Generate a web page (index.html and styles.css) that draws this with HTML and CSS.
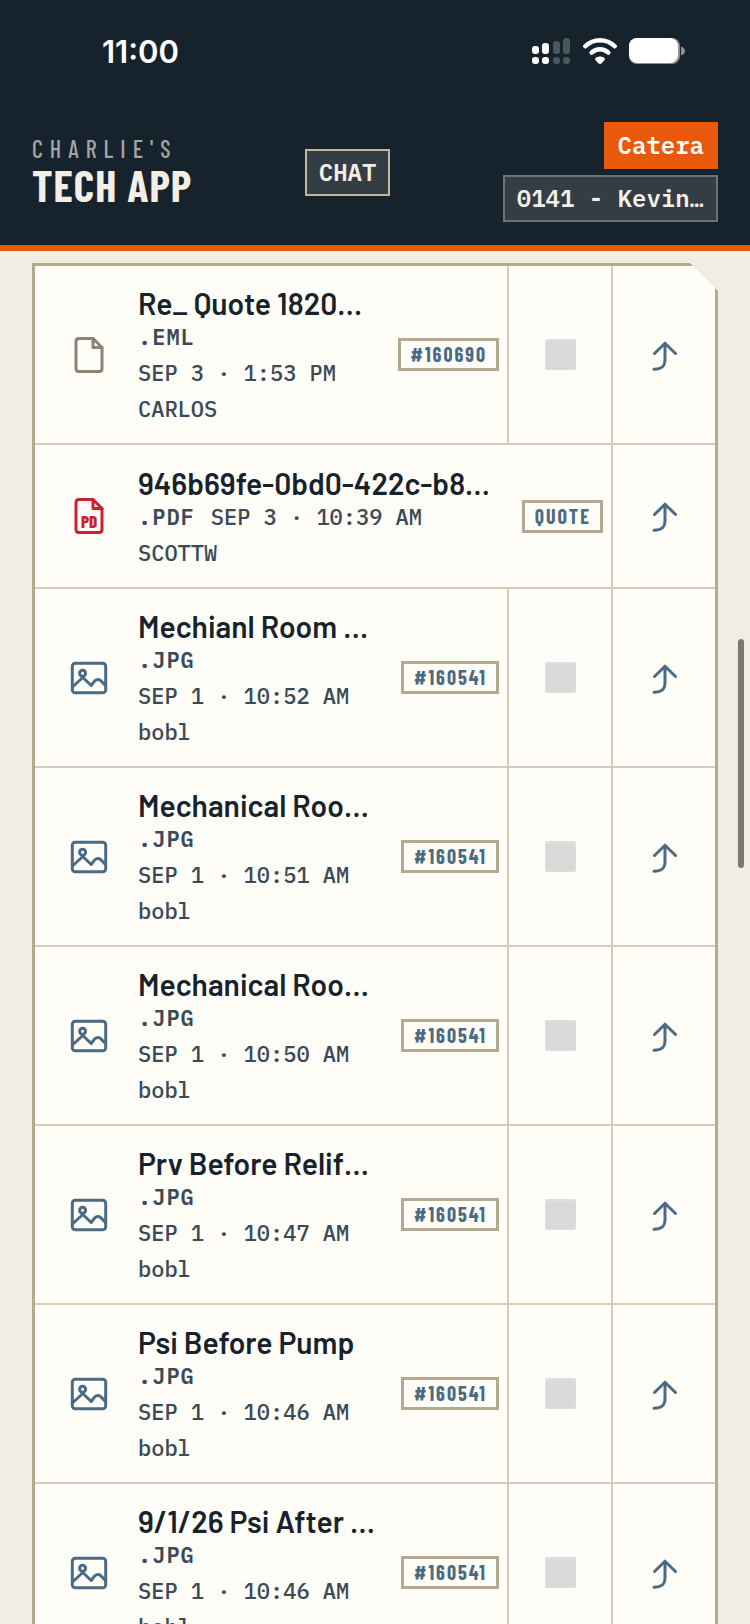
FILE: index.html
```html
<!DOCTYPE html>
<html lang="en">
<head>
    <meta charset="UTF-8">
    <meta name="viewport" content="width=device-width, initial-scale=1.0">
    <title>Charlie's Tech App</title>
    <link rel="stylesheet" href="styles.css">
</head>
<body>
    <!-- Shared icons -->
    <svg class="icon-defs" aria-hidden="true">
        <symbol id="icon-file" viewBox="0 0 40 40">
            <path d="M10 3.5H24L33 12.5V33.5Q33 36.5 30 36.5H10Q7 36.5 7 33.5V6.5Q7 3.5 10 3.5Z"/>
            <path d="M24 3.5V12.5H33"/>
        </symbol>
        <symbol id="icon-image" viewBox="0 0 40 40">
            <rect x="3.3" y="5.3" width="33.4" height="29.4" rx="3"/>
            <circle cx="13.6" cy="15.3" r="3"/>
            <path d="M4 28.5L13.8 19.5L22.2 27.5L25.5 23.2Q28.6 20.2 31.7 22.6L36.5 27.5"/>
        </symbol>
        <symbol id="icon-share" viewBox="0 0 32 32">
            <path d="M6.5 14.5L17 4.2L27.5 14.5M17 4.2V20.5C17 27.5 14 30.2 6 30.2"/>
        </symbol>
    </svg>

    <header class="app-header">
        <div class="status-bar">
            <span class="status-time">11:00</span>
            <div class="status-icons">
                <svg width="39" height="28" viewBox="0 0 39 28" aria-hidden="true">
                    <g fill="#fff">
                        <rect x="0" y="9" width="7" height="8" rx="3"/>
                        <rect x="0" y="20" width="7" height="7" rx="3"/>
                        <rect x="10" y="6" width="7" height="11" rx="3"/>
                        <rect x="10" y="20" width="7" height="7" rx="3"/>
                    </g>
                    <g fill="#4b565c">
                        <rect x="21" y="4" width="7" height="13" rx="3"/>
                        <rect x="21" y="20" width="7" height="7" rx="3"/>
                        <rect x="31" y="1" width="7" height="16" rx="3"/>
                        <rect x="31" y="20" width="7" height="7" rx="3"/>
                    </g>
                </svg>
                <svg width="34" height="28" viewBox="0 0 34 28" aria-hidden="true">
                    <g fill="none" stroke="#fff" stroke-width="4.4" stroke-linecap="round">
                        <path d="M2.3 9.3Q8.5 3.2 17 3.2T31.7 9.3"/>
                        <path d="M8.6 15.7Q12.2 12.3 17 12.3T25.4 15.7"/>
                    </g>
                    <path d="M17 27Q16 27 15 26L12.3 22.8Q11.6 21.4 13.2 20.5Q17 18.6 20.8 20.5Q22.4 21.4 21.7 22.8L19 26Q18 27 17 27Z" fill="#fff"/>
                </svg>
                <svg width="56" height="28" viewBox="0 0 56 28" aria-hidden="true">
                    <rect x="0" y="1" width="51" height="26" rx="8" fill="#8b9194"/>
                    <rect x="0" y="1" width="49" height="25" rx="8" fill="#fff"/>
                    <path d="M52 9.5Q56 11 56 14T52 18.5Z" fill="#8b9194"/>
                </svg>
            </div>
        </div>
        <div class="header-row">
            <div class="brand">
                <span class="brand-small">CHARLIE'S</span>
                <h1 class="brand-name">TECH APP</h1>
            </div>
            <button type="button" class="header-btn btn-chat">CHAT</button>
            <div class="header-actions">
                <button type="button" class="header-btn btn-site">Catera</button>
                <button type="button" class="header-btn btn-user">0141 - Kevin…</button>
            </div>
        </div>
    </header>

    <main class="content">
        <ul class="file-list">
            <li class="file-row">
                <button type="button" class="file-open">
                    <svg class="file-icon icon-other" aria-hidden="true"><use href="#icon-file"/></svg>
                    <span class="file-info">
                        <span class="file-title">Re_ Quote 1820…</span>
                        <span class="file-meta"><b>.EML</b><span>SEP 3 · 1:53 PM</span><span>CARLOS</span></span>
                    </span>
                    <span class="file-tag">#160690</span>
                </button>
                <label class="file-check"><input type="checkbox" aria-label="Select Re_ Quote 1820"></label>
                <button type="button" class="file-share" aria-label="Share"><svg class="share-icon"><use href="#icon-share"/></svg></button>
            </li>
            <li class="file-row">
                <button type="button" class="file-open">
                    <svg class="file-icon icon-pdf" viewBox="0 0 40 40" aria-hidden="true">
                        <use href="#icon-file"/>
                        <text class="pdf-label" x="20" y="32" text-anchor="middle">PD</text>
                    </svg>
                    <span class="file-info">
                        <span class="file-title">946b69fe-0bd0-422c-b8…</span>
                        <span class="file-meta"><b>.PDF</b><span>SEP 3 · 10:39 AM</span><span>SCOTTW</span></span>
                    </span>
                    <span class="file-tag">QUOTE</span>
                </button>
                <button type="button" class="file-share" aria-label="Share"><svg class="share-icon"><use href="#icon-share"/></svg></button>
            </li>
            <li class="file-row">
                <button type="button" class="file-open">
                    <svg class="file-icon icon-image" aria-hidden="true"><use href="#icon-image"/></svg>
                    <span class="file-info">
                        <span class="file-title">Mechianl Room …</span>
                        <span class="file-meta"><b>.JPG</b><span>SEP 1 · 10:52 AM</span><span>bobl</span></span>
                    </span>
                    <span class="file-tag">#160541</span>
                </button>
                <label class="file-check"><input type="checkbox" aria-label="Select Mechianl Room"></label>
                <button type="button" class="file-share" aria-label="Share"><svg class="share-icon"><use href="#icon-share"/></svg></button>
            </li>
            <li class="file-row">
                <button type="button" class="file-open">
                    <svg class="file-icon icon-image" aria-hidden="true"><use href="#icon-image"/></svg>
                    <span class="file-info">
                        <span class="file-title">Mechanical Roo…</span>
                        <span class="file-meta"><b>.JPG</b><span>SEP 1 · 10:51 AM</span><span>bobl</span></span>
                    </span>
                    <span class="file-tag">#160541</span>
                </button>
                <label class="file-check"><input type="checkbox" aria-label="Select Mechanical Room"></label>
                <button type="button" class="file-share" aria-label="Share"><svg class="share-icon"><use href="#icon-share"/></svg></button>
            </li>
            <li class="file-row">
                <button type="button" class="file-open">
                    <svg class="file-icon icon-image" aria-hidden="true"><use href="#icon-image"/></svg>
                    <span class="file-info">
                        <span class="file-title">Mechanical Roo…</span>
                        <span class="file-meta"><b>.JPG</b><span>SEP 1 · 10:50 AM</span><span>bobl</span></span>
                    </span>
                    <span class="file-tag">#160541</span>
                </button>
                <label class="file-check"><input type="checkbox" aria-label="Select Mechanical Room"></label>
                <button type="button" class="file-share" aria-label="Share"><svg class="share-icon"><use href="#icon-share"/></svg></button>
            </li>
            <li class="file-row">
                <button type="button" class="file-open">
                    <svg class="file-icon icon-image" aria-hidden="true"><use href="#icon-image"/></svg>
                    <span class="file-info">
                        <span class="file-title">Prv Before Relif…</span>
                        <span class="file-meta"><b>.JPG</b><span>SEP 1 · 10:47 AM</span><span>bobl</span></span>
                    </span>
                    <span class="file-tag">#160541</span>
                </button>
                <label class="file-check"><input type="checkbox" aria-label="Select Prv Before Relif"></label>
                <button type="button" class="file-share" aria-label="Share"><svg class="share-icon"><use href="#icon-share"/></svg></button>
            </li>
            <li class="file-row">
                <button type="button" class="file-open">
                    <svg class="file-icon icon-image" aria-hidden="true"><use href="#icon-image"/></svg>
                    <span class="file-info">
                        <span class="file-title">Psi Before Pump</span>
                        <span class="file-meta"><b>.JPG</b><span>SEP 1 · 10:46 AM</span><span>bobl</span></span>
                    </span>
                    <span class="file-tag">#160541</span>
                </button>
                <label class="file-check"><input type="checkbox" aria-label="Select Psi Before Pump"></label>
                <button type="button" class="file-share" aria-label="Share"><svg class="share-icon"><use href="#icon-share"/></svg></button>
            </li>
            <li class="file-row">
                <button type="button" class="file-open">
                    <svg class="file-icon icon-image" aria-hidden="true"><use href="#icon-image"/></svg>
                    <span class="file-info">
                        <span class="file-title">9/1/26 Psi After …</span>
                        <span class="file-meta"><b>.JPG</b><span>SEP 1 · 10:46 AM</span><span>bobl</span></span>
                    </span>
                    <span class="file-tag">#160541</span>
                </button>
                <label class="file-check"><input type="checkbox" aria-label="Select 9/1/26 Psi After"></label>
                <button type="button" class="file-share" aria-label="Share"><svg class="share-icon"><use href="#icon-share"/></svg></button>
            </li>
        </ul>
    </main>
    <div class="scroll-thumb"></div>
</body>
</html>
```
FILE: styles.css
```css
:root {
    --navy: #17232c;
    --orange: #e8590c;
    --cream: #f4efe6;
    --page-bg: #f2ede3;
    --card-bg: #fffdf8;
    --tan: #b5aa90;
    --line: #d6ccb8;
    --steel: #4a6b82;
    --slate: #3a4a57;
    --mono: "IBM Plex Mono", "Liberation Mono", monospace;
    --condensed: "Barlow Condensed", "Liberation Sans Narrow", "Roboto", sans-serif;
    --body: "Barlow", "Roboto", sans-serif;
}

* {
    box-sizing: border-box;
}

body {
    display: flex;
    flex-direction: column;
    height: 100vh;
    margin: 0;
    overflow: hidden;
    background-color: var(--page-bg);
    color: var(--navy);
    font-family: var(--body);
}

button {
    margin: 0;
    border: none;
    background: none;
    color: inherit;
    font-family: inherit;
    cursor: pointer;
}

.icon-defs {
    display: none;
}

/* Header */
.app-header {
    flex: none;
    padding: 0 32px 23px;
    background-color: var(--navy);
    border-bottom: 6px solid var(--orange);
}

.status-bar {
    display: flex;
    justify-content: space-between;
    align-items: center;
    height: 102px;
    padding: 0 33px 0 70px;
    color: #fff;
}

.status-time {
    font-family: "Inter", sans-serif;
    font-size: 31px;
    font-weight: 600;
}

.status-icons {
    display: flex;
    align-items: center;
    gap: 12px;
}

.header-row {
    display: flex;
    justify-content: space-between;
    align-items: center;
    padding-top: 20px;
}

.brand {
    display: flex;
    flex-direction: column;
    padding-bottom: 2px;
    font-family: var(--condensed);
}

.brand-small {
    color: #a3a5a3;
    font-size: 24px;
    font-weight: 500;
    line-height: 28px;
    letter-spacing: 7px;
}

.brand-name {
    margin: 0;
    color: var(--cream);
    font-size: 44px;
    font-weight: 700;
    line-height: 44px;
    letter-spacing: 1px;
}

.header-actions {
    display: flex;
    flex-direction: column;
    align-items: flex-end;
    gap: 6px;
}

.header-btn {
    padding: 0 12px;
    border: 2px solid transparent;
    color: var(--cream);
    font-family: var(--mono);
    font-size: 24px;
    font-weight: 600;
    line-height: 43px;
}

.btn-chat {
    background-color: #333d43;
    border-color: #c2b79c;
}

.btn-site {
    background-color: var(--orange);
    border-color: var(--orange);
    color: #fff;
}

.btn-user {
    background-color: #333d43;
    border-color: #6b7377;
}

/* File list */
.content {
    flex: 1;
    min-height: 0;
    padding: 12px 32px 0;
}

.file-list {
    margin: 0;
    padding: 0;
    list-style: none;
    background-color: var(--card-bg);
    border: 3px solid var(--tan);
    clip-path: polygon(0 0, calc(100% - 28px) 0, 100% 28px, 100% 100%, 0 100%);
}

.file-row {
    display: flex;
    min-height: 144px;
    border-bottom: 2px solid var(--line);
}

.file-open {
    display: flex;
    flex: 1;
    align-items: center;
    min-width: 0;
    padding: 0 8px 0 0;
    text-align: left;
}

.file-icon {
    flex: none;
    width: 40px;
    height: 40px;
    margin: 0 29px 0 34px;
    fill: none;
    stroke: currentColor;
    stroke-width: 3;
    stroke-linecap: round;
    stroke-linejoin: round;
}

.icon-other {
    color: #8c8473;
}

.icon-pdf {
    color: #cc2229;
}

.icon-image {
    color: var(--steel);
}

.pdf-label {
    fill: currentColor;
    stroke: none;
    font-family: var(--condensed);
    font-size: 17px;
    font-weight: 800;
}

.file-info {
    flex: 1;
    min-width: 0;
    margin-right: 16px;
    padding: 21px 0 16px;
}

.file-title {
    display: block;
    font-size: 30px;
    font-weight: 600;
    line-height: 32px;
    white-space: nowrap;
}

.file-meta {
    display: flex;
    flex-wrap: wrap;
    column-gap: 16px;
    color: var(--slate);
    font-family: var(--mono);
    font-size: 22px;
    font-weight: 500;
    line-height: 36px;
}

.file-meta b {
    font-weight: 600;
    letter-spacing: 1px;
}

/* The uploader always sits on its own line */
.file-meta span:last-child {
    flex-basis: 100%;
}

.file-tag {
    flex: none;
    padding: 0 9px 0 10px;
    border: 3px solid var(--tan);
    color: var(--steel);
    font-family: var(--condensed);
    font-size: 20px;
    font-weight: 700;
    line-height: 27px;
    letter-spacing: 2px;
}

.file-check,
.file-share {
    display: flex;
    flex: none;
    justify-content: center;
    align-items: center;
    width: 104px;
    padding: 0;
    border-left: 2px solid var(--line);
}

.file-check input {
    width: 31px;
    height: 31px;
    margin: 0;
    appearance: none;
    background-color: #d9d9d9;
    border: 1px solid #dedede;
    border-top: 3px solid #dedede;
    border-radius: 2px;
}

.share-icon {
    width: 32px;
    height: 32px;
    fill: none;
    stroke: var(--steel);
    stroke-width: 3;
    stroke-linecap: round;
    stroke-linejoin: round;
}

/* Overlay scrollbar */
.scroll-thumb {
    position: fixed;
    top: 639px;
    right: 6px;
    width: 6px;
    height: 229px;
    background-color: #7b7872;
    border-radius: 3px;
}
```
